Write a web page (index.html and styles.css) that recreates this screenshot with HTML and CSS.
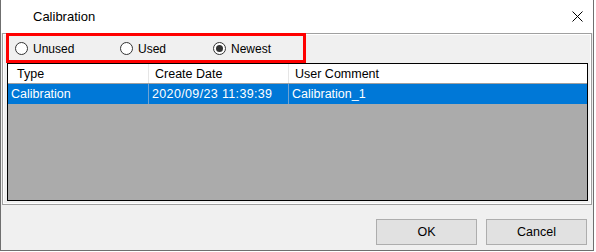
FILE: index.html
```html
<!DOCTYPE html>
<html lang="en">
<head>
  <meta charset="UTF-8" />
  <title>Calibration</title>
  <link rel="stylesheet" href="styles.css">
</head>
<body>
  <div class="window">
    <div class="titlebar">
      <span class="title">Calibration</span>
      <svg class="close" width="11" height="11" viewBox="0 0 11 11">
        <path d="M0.5 0.5 L10.5 10.5 M10.5 0.5 L0.5 10.5" stroke="#000" stroke-width="1" fill="none" />
      </svg>
    </div>

    <div class="client">
      <div class="panel">
        <div class="filter">
          <label class="radio unused"><span class="circle"></span>Unused</label>
          <label class="radio used"><span class="circle"></span>Used</label>
          <label class="radio checked"><span class="circle"></span>Newest</label>
        </div>
        <div class="mark"></div>

        <div class="list">
          <div class="row head">
            <div class="cell c1">Type</div>
            <div class="cell c2">Create Date</div>
            <div class="cell c3">User Comment</div>
          </div>
          <div class="row selected">
            <div class="cell c1">Calibration</div>
            <div class="cell c2 date">2020/09/23 11:39:39</div>
            <div class="cell c3">Calibration_1</div>
          </div>
        </div>
      </div>

      <div class="footer">
        <button>OK</button>
        <button>Cancel</button>
      </div>
    </div>
  </div>
</body>
</html>
```

FILE: styles.css
```css
body {
  margin: 0;
  background: #fff;
  font-family: "Liberation Sans", Arial, sans-serif;
  color: #000;
}
.window {
  width: 594px;
  height: 251px;
  box-sizing: border-box;
  border: 1px solid #6f6f6f;
  border-top: none;
  display: flex;
  flex-direction: column;
  background: #fff;
}
.titlebar {
  height: 33px;
  display: flex;
  align-items: center;
  justify-content: space-between;
  padding: 0 10px 0 32px;
  font-size: 13px;
}
.close {
  display: block;
  margin-top: -1px;
}
.client {
  flex: 1;
  background: #f0f0f0;
  display: flex;
  flex-direction: column;
}
.panel {
  position: relative;
  height: 172px;
  margin: 0 1px;
  box-sizing: border-box;
  border: 1px solid #a0a0a0;
  box-shadow: inset 1px 1px 0 #fff, inset -1px -1px 0 #fff;
  padding: 0 3px 3px 4px;
  display: flex;
  flex-direction: column;
}
.filter {
  height: 29px;
  display: flex;
  align-items: center;
  padding-left: 8px;
  font-size: 12px;
}
.radio {
  display: flex;
  align-items: center;
  gap: 5px;
}
.unused { width: 105px; }
.used { width: 93px; }
.circle {
  width: 13px;
  height: 13px;
  box-sizing: border-box;
  border: 1px solid #333;
  border-radius: 50%;
  background: #fff;
  display: flex;
  align-items: center;
  justify-content: center;
}
.checked .circle::after {
  content: "";
  width: 7px;
  height: 7px;
  border-radius: 50%;
  background: #333;
}
.mark {
  position: absolute;
  left: 3px;
  top: -1px;
  width: 300px;
  height: 30px;
  box-sizing: border-box;
  border: 3px solid #f00;
}
.list {
  flex: 1;
  border: 1px solid #000;
  background: #ababab;
  font-size: 12.5px;
}
.row {
  display: flex;
  height: 20px;
  box-sizing: border-box;
}
.cell {
  display: flex;
  align-items: center;
  padding-left: 3px;
  box-sizing: border-box;
}
.c1 { width: 141px; }
.c2 { width: 140px; }
.c3 { flex: 1; }
.head {
  background: #fff;
  border-bottom: 1px solid #a0a0a0;
}
.head .cell { padding-left: 6px; }
.head .c1 { padding-left: 9px; }
.head .c1,
.head .c2 { border-right: 1px solid #e5e5e5; }
.selected {
  background: #0078d7;
  color: #fff;
}
.selected .c1,
.selected .c2 { border-right: 1px solid #6fa3d3; }
.date { letter-spacing: 0.35px; }
.footer {
  display: flex;
  justify-content: flex-end;
  gap: 9px;
  padding: 14px 6px 0 0;
}
button {
  width: 101px;
  height: 26px;
  background: #e1e1e1;
  border: 1px solid #adadad;
  font-family: "Liberation Sans", Arial, sans-serif;
  font-size: 12.5px;
  color: #000;
  padding: 0;
}
```
